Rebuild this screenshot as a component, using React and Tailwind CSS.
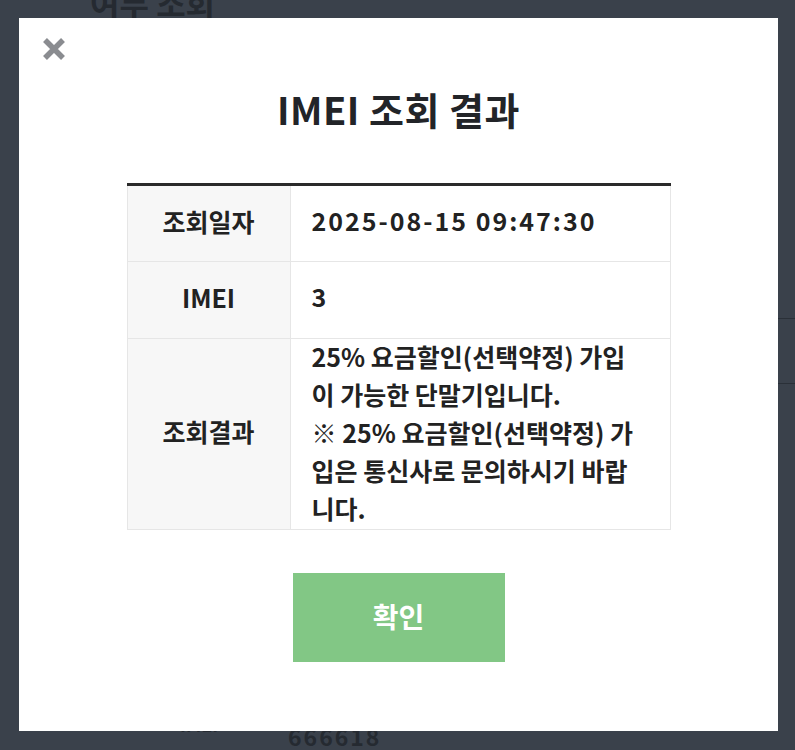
import React from "react";

const rows = [
  { label: "조회일자", value: ["2025-08-15 09:47:30"], h: "h-[76px]", wide: true },
  { label: "IMEI", value: ["3"], h: "h-[77px]", wide: true },
  {
    label: "조회결과",
    value: [
      "25% 요금할인(선택약정) 가입",
      "이 가능한 단말기입니다.",
      "※ 25% 요금할인(선택약정) 가",
      "입은 통신사로 문의하시기 바랍",
      "니다.",
    ],
    h: "h-[191px]",
    wide: false,
  },
];

function CloseIcon() {
  return (
    <svg width="24" height="24" viewBox="0 0 24 24">
      <path d="M3 3 L21 21 M21 3 L3 21" stroke="#8a8c90" strokeWidth="5.5" strokeLinecap="butt" />
    </svg>
  );
}

export default function App() {
  return (
    <div
      className="relative h-[750px] w-[795px] overflow-hidden bg-[#3a414b]"
      style={{ fontFamily: '"Noto Sans CJK KR", "Noto Sans", sans-serif' }}
    >
      {/* page behind the overlay */}
      <div className="flex h-full flex-col justify-between">
        <div className="-mt-[22px] pl-[90px] text-[32px] font-bold text-[#252a31]">여부 조회</div>
        <div className="flex items-start pb-[2px] pl-[180px] font-bold text-[#252a31]">
          <span className="-mt-[10px] w-[108px] text-[18px] leading-none">IMEI</span>
          <span className="text-[23px] leading-none tracking-[2px]">666618</span>
        </div>
      </div>

      {/* right-edge lines of the page behind */}
      <div className="absolute right-0 top-[318px] flex w-[17px] flex-col gap-[64px]">
        <div className="h-[1px] bg-[#2a3038]" />
        <div className="h-[1px] bg-[#2a3038]" />
      </div>

      {/* modal */}
      <div className="absolute left-[19px] top-[18px] flex h-[713px] w-[759px] flex-col bg-white px-[23px] pt-[19px]">
        <button className="h-[24px] w-[24px]">
          <CloseIcon />
        </button>

        <div className="mt-[22px] flex h-[50px] items-center justify-center text-[38px] font-bold tracking-[0.5px] text-[#222428]">
          IMEI 조회 결과
        </div>

        <div className="mx-auto mt-[50px] w-[544px] border-t-[3px] border-[#2a2a2a]">
          <div className="border-x border-[#e6e6e6]">
            {rows.map((r) => (
              <div key={r.label} className={`flex ${r.h} border-b border-[#e6e6e6]`}>
                <div className="flex w-[163px] items-center justify-center border-r border-[#e6e6e6] bg-[#f7f7f7] pb-[4px] text-[25px] font-bold text-[#222]">
                  {r.label}
                </div>
                <div
                  className={`flex flex-1 flex-col justify-center pl-[21px] text-[25px] font-bold leading-[38px] text-[#222] ${
                    r.wide ? "pb-[8px] tracking-[2px]" : "pb-[4px]"
                  }`}
                >
                  {r.value.map((line, i) => (
                    <div key={i} className="whitespace-nowrap">
                      {line}
                    </div>
                  ))}
                </div>
              </div>
            ))}
          </div>
        </div>

        <button className="mx-auto mt-[43px] flex h-[89px] w-[212px] items-center justify-center bg-[#82c785] pb-[4px] text-[28px] font-bold text-white">
          확인
        </button>
      </div>
    </div>
  );
}
